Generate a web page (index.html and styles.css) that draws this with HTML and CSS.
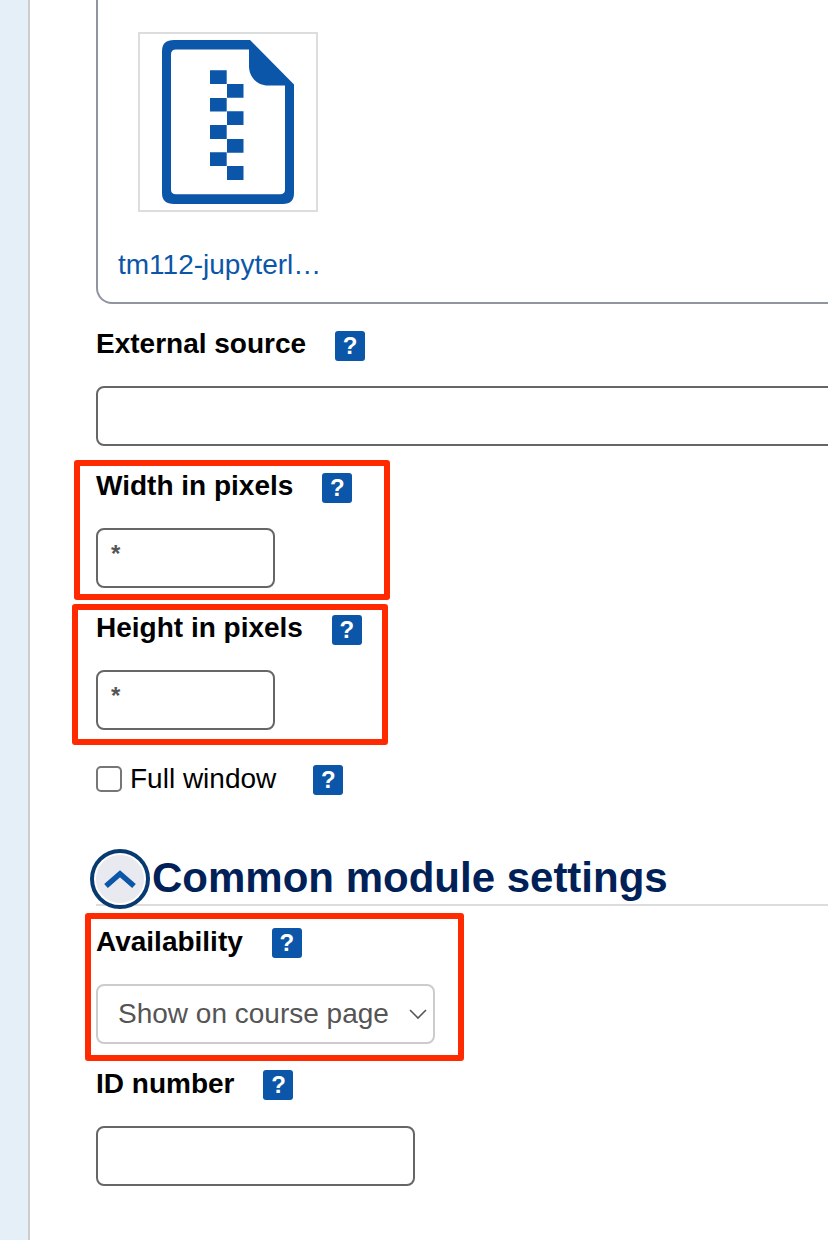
FILE: index.html
```html
<!DOCTYPE html>
<html lang="en">
<head>
<meta charset="utf-8">
<title>Module settings</title>
<link rel="stylesheet" href="styles.css">
</head>
<body>
<main class="page">
  <div class="filebox">
    <div class="thumb">
      <svg width="176" height="176" viewBox="140 34 176 176" fill="#0b56a8" aria-hidden="true">
        <path fill-rule="evenodd" d="M174 40H250L294 84.5V193Q294 204 283 204H174Q162 204 162 193V51Q162 40 174 40ZM176 49.500Q171 49.500 171 54.500V189.500Q171 194.300 176 194.300H280Q285 194.300 285 189.500V85.500H268C257 85.500 249 77 249 66V49.500Z"/>
        <path d="M210 70.200h16.700v13.800h-16.700zM227 84h16.500v13.800h-16.500zM210 98h16.700v13.600h-16.700zM227 111.300h16.500v13.700h-16.500zM210 125h16.700v14h-16.700zM227 139h16.500v13.800h-16.500zM210 152.300h16.700v13.700h-16.700zM227 166h16.500v14h-16.500z"/>
      </svg>
    </div>
    <a class="filename">tm112-jupyterl…</a>
  </div>

  <section class="field">
    <div class="label"><label>External source</label><span class="help">?</span></div>
    <div class="input wide"></div>
  </section>
  <section class="field">
    <div class="label"><label>Width in pixels</label><span class="help">?</span></div>
    <div class="input small">*</div>
    <div class="mark mark-width"></div>
  </section>
  <section class="field">
    <div class="label"><label>Height in pixels</label><span class="help">?</span></div>
    <div class="input small">*</div>
    <div class="mark mark-height"></div>
  </section>
  <div class="check-row">
    <span class="checkbox"></span><span>Full window</span><span class="help">?</span>
  </div>

  <div class="section-head">
    <span class="toggle">
      <svg width="48" height="48" viewBox="0 0 48 48" fill="none" stroke="#0b56a8" stroke-width="5.500" aria-hidden="true"><path d="M10 31L24 18.800L38 31"/></svg>
    </span>
    <h2>Common module settings</h2>
  </div>

  <section class="field common">
    <div class="label"><label>Availability</label><span class="help">?</span></div>
    <div class="input select"><span>Show on course page</span>
      <svg width="18" height="12" viewBox="0 0 18 12" fill="none" stroke="#555" stroke-width="1.600" aria-hidden="true"><path d="M1 2L9 10L17 2"/></svg>
    </div>
    <div class="mark mark-availability"></div>
  </section>
  <section class="field common">
    <div class="label"><label>ID number</label><span class="help">?</span></div>
    <div class="input medium"></div>
  </section>
</main>
</body>
</html>
```

FILE: styles.css
```css
* { box-sizing: border-box; }
body {
  margin: 0;
  background: #e4eff8;
  font: 28px/42px "Liberation Sans", Arial, sans-serif;
  color: #000;
  overflow: hidden;
}
.page {
  height: 1240px;
  margin-left: 28px;
  padding-left: 66px;
  border-left: 2px solid #ccc;
  background: #fff;
  overflow: hidden;
}
.filebox {
  height: 304px;
  margin-right: -20px;
  padding: 32px 0 0 20px;
  border: 2px solid #8f959e;
  border-top: 0;
  border-radius: 0 0 0 16px;
}
.thumb {
  width: 180px;
  height: 180px;
  margin-left: 20px;
  border: 2px solid #ddd;
}
.thumb svg, .toggle svg, .select svg { display: block; }
.filename {
  display: block;
  margin-top: 32px;
  color: #0b56a8;
}
.filebox + .field { margin-top: 18px; }
.field {
  position: relative;
  height: 124px;
  margin-bottom: 18px;
}
.label {
  display: flex;
  height: 64px;
  padding-top: 1px;
  font-weight: bold;
}
.help {
  width: 30px;
  height: 30px;
  margin: 8px 0 0 29px;
  border-radius: 3px;
  background: #0b56a8;
  color: #fff;
  font-size: 24px;
  font-weight: bold;
  line-height: 30px;
  text-align: center;
}
.common .help { margin-top: 7px; }
.input {
  height: 60px;
  padding: 0 12px;
  border: 2px solid #666;
  border-radius: 8px;
  color: #555;
}
.wide { margin-right: -20px; }
.small {
  width: 179px;
  font-size: 24px;
  font-weight: bold;
  line-height: 48px;
  padding-left: 13px;
}
.medium { width: 319px; }
.select {
  display: flex;
  align-items: center;
  justify-content: space-between;
  width: 339px;
  padding: 0 6px 0 20px;
  border-color: #ccc;
  line-height: 54px;
}
.select span { margin-bottom: 1px; }
.mark {
  position: absolute;
  border: 6px solid #ff2a00;
  border-radius: 3px;
}
.mark-width { left: -22px; top: -4px; width: 316px; height: 140px; }
.mark-height { left: -24px; top: -2px; width: 316px; height: 141px; }
.mark-availability { left: -11px; top: -7px; width: 379px; height: 148px; }
.check-row {
  display: flex;
  height: 42px;
  margin-top: 27px;
  line-height: 44px;
}
.checkbox {
  width: 26px;
  height: 26px;
  margin: 9px 8px 0 0;
  border: 2px solid #767676;
  border-radius: 5px;
}
.check-row .help { margin-left: 37px; }
.section-head {
  display: flex;
  height: 57px;
  margin: 50px 0 14px;
  border-bottom: 2px solid #ddd;
}
.toggle {
  flex: none;
  width: 60px;
  height: 60px;
  margin-left: -6px;
  padding: 4px;
  border: 4px solid #073a70;
  border-radius: 50%;
  background: radial-gradient(circle, #e9eaef 23.500px, #fff 24.500px);
}
.toggle svg { margin: -2px; }
h2 {
  margin: 0 0 0 2px;
  color: #002158;
  font-size: 42px;
  line-height: 57px;
  white-space: nowrap;
}
```
